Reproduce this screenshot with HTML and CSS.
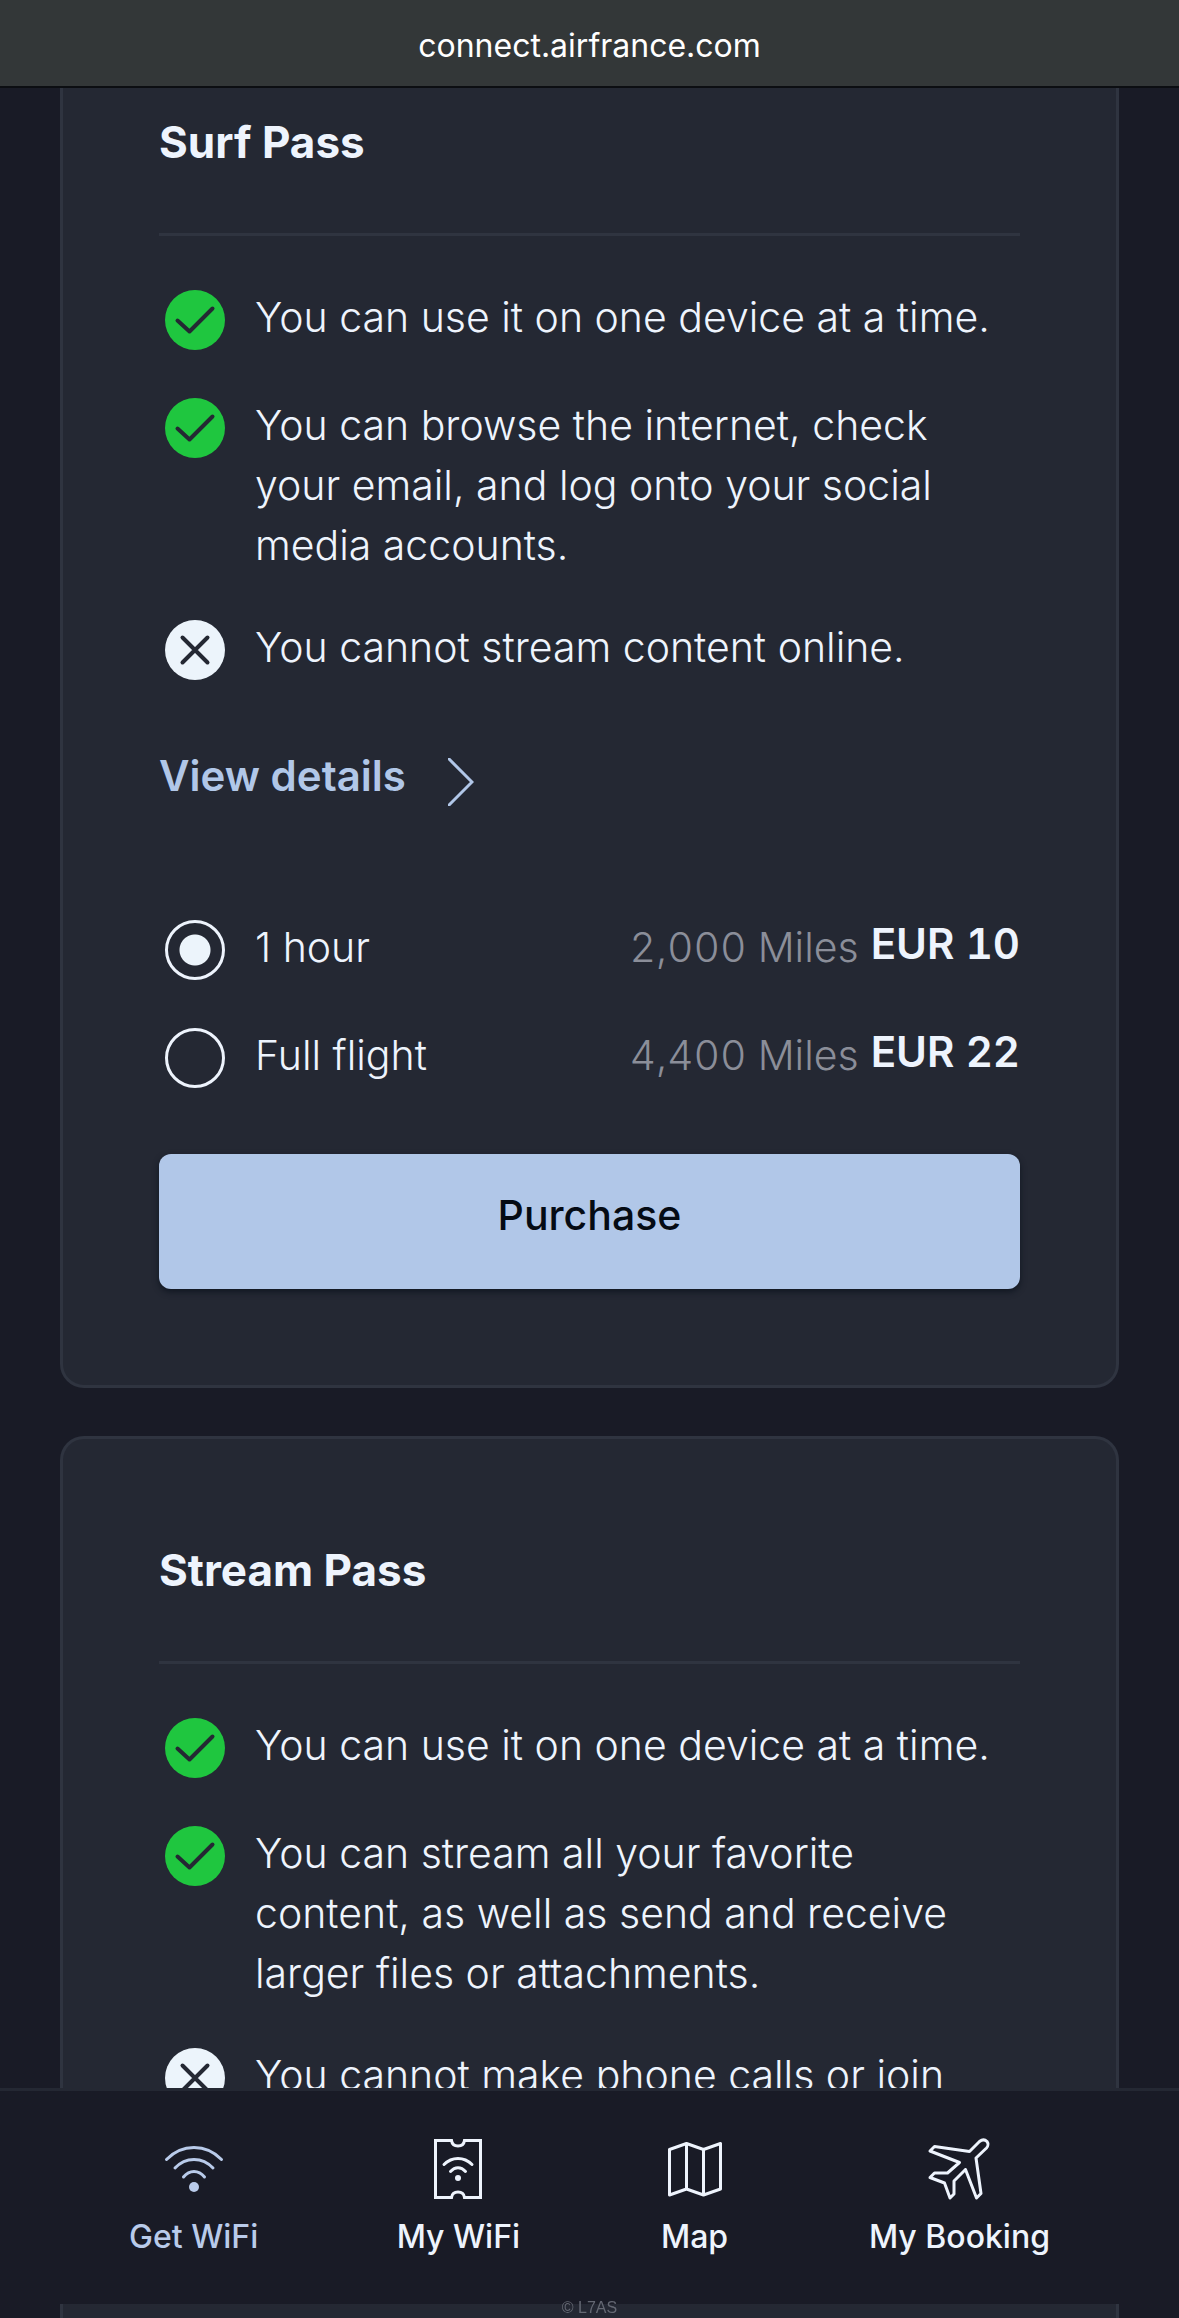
FILE: index.html
```html
<!DOCTYPE html>
<html lang="en">

<head>

<meta charset="UTF-8">
<meta name="viewport" content="width=device-width">

<title>Air France Connect | Get WiFi</title>

<link rel="stylesheet" href="styles.css">

</head>

<body>

<!-- shared icons -->
<svg class="defs" aria-hidden="true">
<symbol id="check" viewBox="0 0 60 60">
<circle cx="30" cy="30" r="30" fill="#1fc63f"/>
<path d="M12.500 30.500L24.500 41.500L47.500 18.500" fill="none" stroke="#242833" stroke-width="4" stroke-linecap="round" stroke-linejoin="round"/>
</symbol>
<symbol id="cross" viewBox="0 0 60 60">
<circle cx="30" cy="30" r="30" fill="#ecf4fb"/>
<path d="M17.500 17.500L42.500 42.500M42.500 17.500L17.500 42.500" fill="none" stroke="#242833" stroke-width="4" stroke-linecap="round"/>
</symbol>
</svg>

<div class="screen">

<header class="urlbar">connect.airfrance.com</header>

<main class="passes">

<section class="card">
<h2>Surf Pass</h2>
<ul class="features">
<li><svg class="mark"><use href="#check"/></svg><span>You can use it on one device at a time.</span></li>
<li><svg class="mark"><use href="#check"/></svg><span>You can browse the internet, check your email, and log onto your social media accounts.</span></li>
<li><svg class="mark"><use href="#cross"/></svg><span>You cannot stream content online.</span></li>
</ul>
<a class="details" href="#details">View details
<svg class="chevron" viewBox="0 0 26 48"><path d="M1 1L24 24L1 47"/></svg>
</a>
<form class="prices">
<div class="price">
<input type="radio" name="surf" id="surf-hour" checked>
<label for="surf-hour">1 hour</label>
<span class="miles">2,000 Miles</span>
<strong class="eur">EUR 10</strong>
</div>
<div class="price">
<input type="radio" name="surf" id="surf-flight">
<label for="surf-flight">Full flight</label>
<span class="miles">4,400 Miles</span>
<strong class="eur">EUR 22</strong>
</div>
<button type="button" class="purchase">Purchase</button>
</form>
</section>

<section class="card last">
<h2>Stream Pass</h2>
<ul class="features">
<li><svg class="mark"><use href="#check"/></svg><span>You can use it on one device at a time.</span></li>
<li><svg class="mark"><use href="#check"/></svg><span>You can stream all your favorite content, as well as send and receive larger files or attachments.</span></li>
<li><svg class="mark"><use href="#cross"/></svg><span>You cannot make phone calls or join</span></li>
</ul>
</section>

</main>

<nav class="tabbar">
<a class="tab active" href="#get">
<svg viewBox="0 0 72 72">
<path d="M8.500 26.500C24 10.500 48 10.500 63.500 26.500M17 35C27.500 23.500 44.500 23.500 55 35M25.500 44C31.500 36.500 40.500 36.500 46.500 44"/>
<circle class="dot" cx="36" cy="54" r="5"/>
</svg>
Get WiFi
</a>
<a class="tab" href="#my">
<svg viewBox="0 0 72 72">
<path stroke-linejoin="miter" d="M13.500 7.500H29.500C30 11 32.500 13 36 13S42 11 42.500 7.500H58.500V64.500H42.500C42 61 39.500 59 36 59S30 61 29.500 64.500H13.500Z"/>
<path d="M22 31.500C30 23.500 42 23.500 50 31.500M28.500 38.500C33 33.500 39 33.500 43.500 38.500"/>
<circle class="dot" cx="36" cy="45" r="3"/>
</svg>
My WiFi
</a>
<a class="tab" href="#map">
<svg viewBox="0 0 72 72">
<path d="M10.500 16.500L27.500 10.500L44.500 16.500L61.500 10.500V56L44.500 62L27.500 56L10.500 62ZM27.500 10.500V56M44.500 16.500V62"/>
</svg>
Map
</a>
<a class="tab" href="#booking">
<svg viewBox="0 0 72 72">
<path d="M46.500 18.500L56.500 8.500C59 6.500 62 6.500 64 8.500C65.500 10.500 65 13.500 63.500 15L53 25L58 60.500L53.500 65L42.500 36.500L31 48V61L27 65L21.500 50L7 44.500L11.500 40H24.500L36.500 29.500L7 18L11.500 13.500Z"/>
</svg>
My Booking
</a>
</nav>

<div class="credit">© L7AS</div>

</div><!-- screen -->

</body>

</html>
```
FILE: styles.css
```css
* {
box-sizing: border-box;
}
body {
margin: 0;
background: #191b26;
color: #eef4fd;
font-family: Inter, "Noto Sans", sans-serif;
font-size: 41px;
font-weight: 300;
line-height: 60px;
}
a {
text-decoration: none;
}
.defs {
display: none;
}
.screen {
height: 100vh;
overflow: hidden;
}
.urlbar {
position: fixed;
top: 0;
left: 0;
right: 0;
height: 88px;
padding-top: 6px;
background: #333738;
border-bottom: 2px solid #0c0e12;
color: #fff;
font-size: 32px;
font-weight: 400;
line-height: 80px;
text-align: center;
}
.passes {
display: flex;
flex-direction: column;
gap: 48px;
height: 100%;
padding: 8px 60px 0 60px;
}
.card {
flex: none;
padding: 96px;
background: #242833;
border: 3px solid #2f3440;
border-radius: 24px;
}
.card.last {
flex: 1 0 auto;
border-bottom: none;
border-radius: 24px 24px 0 0;
}
h2 {
margin: 0 0 51px 0;
padding: 5px 0 61px 0;
border-bottom: 3px solid #2f3440;
font-size: 44px;
font-weight: 700;
line-height: 60px;
}
.features {
display: flex;
flex-direction: column;
gap: 42px;
margin: 0;
padding: 0;
list-style: none;
}
.features li {
display: flex;
gap: 30px;
min-height: 66px;
padding: 0 12px 0 6px;
}
.mark {
flex: none;
width: 60px;
height: 60px;
margin-top: 3px;
}
.details {
display: flex;
align-items: center;
gap: 42px;
margin: 63px 0 111px 0;
color: #b1c7e8;
font-size: 42px;
font-weight: 600;
}
.chevron {
width: 26px;
height: 48px;
margin-top: 12px;
fill: none;
stroke: #b1c7e8;
stroke-width: 3px;
stroke-linecap: round;
}
.price {
display: flex;
align-items: flex-start;
height: 66px;
margin-bottom: 42px;
}
.price input {
appearance: none;
width: 60px;
height: 60px;
margin: 3px 30px 3px 6px;
border: 3px solid #eef4fd;
border-radius: 50%;
}
.price input:checked {
background: radial-gradient(circle, #ecf4fb 15px, transparent 16px);
}
.price label {
flex: 1;
}
.miles {
color: #8b8e99;
font-variant-numeric: tabular-nums;
}
.eur {
margin-left: 12px;
font-size: 42px;
font-weight: 600;
font-variant-numeric: tabular-nums;
line-height: 54px;
}
.purchase {
display: block;
width: 100%;
height: 135px;
margin-top: 63px;
padding: 0 0 14px 0;
background: #b1c7e8;
border: none;
border-radius: 12px;
box-shadow: 0 3px 6px #111722;
color: #050b14;
font: inherit;
font-weight: 500;
}
.tabbar {
position: fixed;
left: 0;
right: 0;
bottom: 14px;
display: flex;
justify-content: space-between;
height: 216px;
padding: 42px 129px 0 129px;
background: #191b26;
border-top: 3px solid #242833;
}
.tab {
display: flex;
flex-direction: column;
align-items: center;
gap: 11px;
color: #eef4fd;
font-size: 32px;
font-weight: 500;
line-height: 42px;
}
.tab.active {
color: #b9cbea;
}
.tab svg {
width: 72px;
height: 72px;
fill: none;
stroke: currentColor;
stroke-width: 3px;
stroke-linecap: round;
stroke-linejoin: round;
}
.tab .dot {
fill: currentColor;
stroke: none;
}
.credit {
position: fixed;
left: 0;
right: 0;
bottom: 0;
color: #646873;
font-family: "Liberation Sans", Arial, sans-serif;
font-size: 16px;
font-weight: 400;
line-height: 20px;
text-align: center;
}
```
